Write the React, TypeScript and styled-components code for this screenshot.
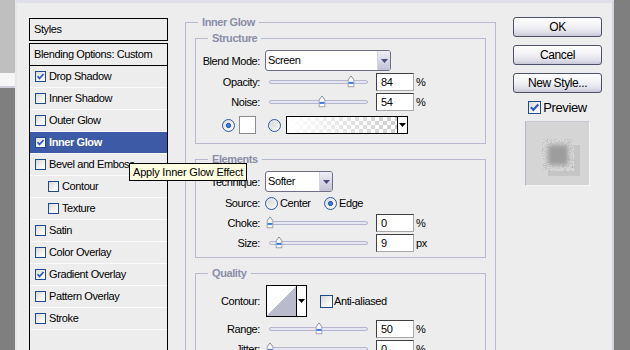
import React from 'react';
import styled, { createGlobalStyle } from 'styled-components';

const BG = '#ededed';

const GlobalStyle = createGlobalStyle`
  html, body {
    margin: 0;
    padding: 0;
    background: #808080;
  }
  body {
    font-family: "Liberation Sans", Arial, sans-serif;
    font-size: 11px;
    letter-spacing: -0.4px;
    color: #000;
  }
  * {
    box-sizing: border-box;
  }
`;

type Effect = { name: string; checked?: boolean; indent?: boolean; selected?: boolean };

const effects: Effect[] = [
  { name: 'Drop Shadow', checked: true },
  { name: 'Inner Shadow' },
  { name: 'Outer Glow' },
  { name: 'Inner Glow', checked: true, selected: true },
  { name: 'Bevel and Emboss' },
  { name: 'Contour', indent: true },
  { name: 'Texture', indent: true },
  { name: 'Satin' },
  { name: 'Color Overlay' },
  { name: 'Gradient Overlay', checked: true },
  { name: 'Pattern Overlay' },
  { name: 'Stroke' },
];

const Check: React.FC<{ checked?: boolean; size?: number }> = ({ checked, size = 13 }) => (
  <CheckBox $size={size}>
    {checked && (
      <svg width={size - 2} height={size - 2} viewBox="0 0 9 9">
        <path d="M1.6 4.2 L3.5 6.4 L7.6 2" fill="none" stroke="#2b58c8" strokeWidth="1.7" />
      </svg>
    )}
  </CheckBox>
);

const Arrow: React.FC<{ color?: string }> = ({ color = '#000' }) => (
  <svg width="7" height="4" viewBox="0 0 7 4">
    <path d="M0 0 H7 L3.5 4 Z" fill={color} />
  </svg>
);

const Slider: React.FC<{ pct: number }> = ({ pct }) => (
  <SliderBox>
    <Track>
      <Thumb style={{ left: `${pct}%` }}>
        <svg width="7" height="12" viewBox="0 0 7 12">
          <path d="M0.5 4.5 L3.5 0.5 L6.5 4.5 V11.5 H0.5 Z" fill="#fbfbfb" stroke="#8c8c9c" />
          <rect x="1" y="6.5" width="5" height="2" fill="#3a7be0" />
        </svg>
      </Thumb>
    </Track>
  </SliderBox>
);

const SliderRow: React.FC<{ label: string; pct: number; value: string; unit: string }> = ({
  label,
  pct,
  value,
  unit,
}) => (
  <Row $h={20}>
    <Label>{label}</Label>
    <Slider pct={pct} />
    <NumField>{value}</NumField>
    <Unit>{unit}</Unit>
  </Row>
);

const App: React.FC = () => {
  return (
    <Screen>
      <GlobalStyle />
      <LeftStrip>
        <StripTop />
        <StripLight />
        <StripDark />
      </LeftStrip>

      <Dialog>
        <StylesPanel>
          <StylesHeader>Styles</StylesHeader>
          <StylesList>
            <BlendRow>Blending Options: Custom</BlendRow>
            {effects.map((e) => (
              <EffectRow key={e.name} $indent={!!e.indent} $selected={!!e.selected}>
                <Check checked={e.checked} size={11} />
                <span>{e.name}</span>
              </EffectRow>
            ))}
          </StylesList>
        </StylesPanel>

        <Main>
          <Group>
            <Legend>Inner Glow</Legend>
            <Sections>
              <Group>
                <Legend>Structure</Legend>
                <Body $pt={4} $pb={8}>
                  <Row $h={23}>
                    <Label>Blend Mode:</Label>
                    <Select $w={126}>
                      <SelectText>Screen</SelectText>
                      <SelectBtn>
                        <Arrow color="#4b4b80" />
                      </SelectBtn>
                    </Select>
                  </Row>
                  <SliderRow label="Opacity:" pct={84} value="84" unit="%" />
                  <SliderRow label="Noise:" pct={54} value="54" unit="%" />
                  <ColorRow>
                    <Radio $checked />
                    <ColorSwatch />
                    <Radio />
                    <GradientSwatch>
                      <GradientFill />
                      <SwatchArrow>
                        <Arrow />
                      </SwatchArrow>
                    </GradientSwatch>
                  </ColorRow>
                </Body>
              </Group>

              <Group>
                <Legend>Elements</Legend>
                <Body $pt={4} $pb={4}>
                  <Row $h={23}>
                    <Label>Technique:</Label>
                    <Select $w={68}>
                      <SelectText>Softer</SelectText>
                      <SelectBtn>
                        <Arrow color="#4b4b80" />
                      </SelectBtn>
                    </Select>
                  </Row>
                  <Row $h={20}>
                    <Label>Source:</Label>
                    <RadioOption $w={59}>
                      <Radio />
                      <span>Center</span>
                    </RadioOption>
                    <RadioOption>
                      <Radio $checked />
                      <span>Edge</span>
                    </RadioOption>
                  </Row>
                  <SliderRow label="Choke:" pct={0} value="0" unit="%" />
                  <SliderRow label="Size:" pct={9} value="9" unit="px" />
                </Body>
              </Group>

              <Group>
                <Legend>Quality</Legend>
                <Body $pt={5} $pb={20}>
                  <Row $h={32}>
                    <Label>Contour:</Label>
                    <ContourSwatch>
                      <ContourCurve />
                      <SwatchArrow>
                        <Arrow />
                      </SwatchArrow>
                    </ContourSwatch>
                    <CheckOption>
                      <Check />
                      <span>Anti-aliased</span>
                    </CheckOption>
                  </Row>
                  <Spacer $h={2} />
                  <SliderRow label="Range:" pct={50} value="50" unit="%" />
                  <SliderRow label="Jitter:" pct={0} value="0" unit="%" />
                </Body>
              </Group>
            </Sections>
          </Group>
        </Main>

        <Side>
          <Button>OK</Button>
          <Button>Cancel</Button>
          <Button>New Style...</Button>
          <PreviewRow>
            <Check checked />
            <span>Preview</span>
          </PreviewRow>
          <PreviewBox>
            <svg width="63" height="63" viewBox="0 0 63 63">
              <defs>
                <filter id="grain" x="0" y="0" width="100%" height="100%">
                  <feTurbulence type="fractalNoise" baseFrequency="1.1" numOctaves="2" seed="7" />
                  <feColorMatrix type="saturate" values="0" />
                  <feComponentTransfer>
                    <feFuncA type="discrete" tableValues="0 0 0.5 0.9" />
                  </feComponentTransfer>
                </filter>
                <filter id="soft" x="-20%" y="-20%" width="140%" height="140%">
                  <feGaussianBlur stdDeviation="2.2" />
                </filter>
                <clipPath id="square">
                  <rect x="16" y="17" width="32" height="32" />
                </clipPath>
              </defs>
              <rect x="22" y="23" width="32" height="31" fill="#c5c5c5" />
              <g clipPath="url(#square)">
                <rect x="16" y="17" width="32" height="32" fill="#d8d8d8" />
                <rect x="16" y="17" width="32" height="32" filter="url(#grain)" />
                <rect x="22" y="23" width="20" height="20" fill="#9d9d9d" filter="url(#soft)" />
              </g>
            </svg>
          </PreviewBox>
        </Side>
      </Dialog>

      <RightStrip />

      <Tooltip>Apply Inner Glow Effect</Tooltip>
    </Screen>
  );
};

export default App;

const Screen = styled.div`
  position: relative;
  display: flex;
  width: 630px;
  height: 350px;
  overflow: hidden;
`;

const LeftStrip = styled.div`
  width: 15px;
  display: flex;
  flex-direction: column;
`;

const StripTop = styled.div`
  height: 73px;
  background: #bfbfbf;
`;

const StripLight = styled.div`
  height: 15px;
  background: #f6f6f6;
  border-bottom: 2px solid #cfcfdf;
`;

const StripDark = styled.div`
  flex: 1;
  background: #7f7f7f;
`;

const RightStrip = styled.div`
  width: 16px;
  background: #7f7f7f;
`;

const Dialog = styled.div`
  flex: 1;
  display: flex;
  align-items: flex-start;
  gap: 17px;
  background: ${BG};
  border-top: 3px solid #e0e0ea;
  border-left: 2px solid #e6e6ee;
  border-right: 2px solid #d4d4e0;
  padding: 14px 10px 0 12px;
`;

const StylesPanel = styled.div`
  width: 139px;
  margin-top: 1px;
  align-self: stretch;
  display: flex;
  flex-direction: column;
`;

const StylesHeader = styled.div`
  height: 23px;
  border: 1px solid #000;
  padding-left: 4px;
  line-height: 21px;
  margin-bottom: 2px;
`;

const StylesList = styled.div`
  flex: 1;
  border: 1px solid #000;
  border-bottom: none;
`;

const BlendRow = styled.div`
  height: 22px;
  border-bottom: 1px solid #000;
  padding-left: 4px;
  line-height: 21px;
`;

const EffectRow = styled.div<{ $indent: boolean; $selected: boolean }>`
  height: 22px;
  display: flex;
  align-items: center;
  gap: 3px;
  padding-left: ${(p) => (p.$indent ? 18 : 5)}px;
  padding-bottom: 1px;
  border-bottom: 1px solid #fbfbfb;
  background: ${(p) => (p.$selected ? '#3d5aa6' : 'transparent')};
  color: ${(p) => (p.$selected ? '#fff' : '#000')};
  font-weight: ${(p) => (p.$selected ? 'bold' : 'normal')};
`;

const CheckBox = styled.span<{ $size: number }>`
  flex-shrink: 0;
  width: ${(p) => p.$size}px;
  height: ${(p) => p.$size}px;
  border: 1px solid #1d4b8f;
  background: linear-gradient(135deg, #d8d8d4 0%, #f4f4f2 60%, #ffffff 100%);
  display: flex;
  align-items: center;
  justify-content: center;
`;

const Main = styled.div`
  width: 311px;
  margin-top: 5px;
`;

const Group = styled.div`
  border: 1px solid #b9b9cf;
`;

const Legend = styled.div`
  width: fit-content;
  height: 13px;
  line-height: 13px;
  margin: -7px 0 0 12px;
  padding: 0 4px;
  background: ${BG};
  color: #8b8ea7;
  font-weight: bold;
`;

const Sections = styled.div`
  display: flex;
  flex-direction: column;
  gap: 15px;
  padding: 9px 9px 40px;
`;

const Body = styled.div<{ $pt: number; $pb: number }>`
  display: flex;
  flex-direction: column;
  padding: ${(p) => p.$pt}px 0 ${(p) => p.$pb}px;
`;

const Row = styled.div<{ $h: number }>`
  height: ${(p) => p.$h}px;
  display: flex;
  align-items: center;
`;

const Spacer = styled.div<{ $h: number }>`
  height: ${(p) => p.$h}px;
`;

const Label = styled.span`
  width: 64px;
  margin-right: 5px;
  text-align: right;
  flex-shrink: 0;
`;

const Select = styled.div<{ $w: number }>`
  width: ${(p) => p.$w}px;
  height: 21px;
  display: flex;
  background: #fff;
  border: 1px solid #6e6e86;
  border-radius: 3px;
  overflow: hidden;
`;

const SelectText = styled.span`
  flex: 1;
  padding-left: 2px;
  line-height: 19px;
`;

const SelectBtn = styled.span`
  width: 13px;
  display: flex;
  align-items: center;
  justify-content: center;
  background: linear-gradient(#eeeef6, #c2c2d6);
  border-left: 1px solid #d4d4e2;
`;

const SliderBox = styled.div`
  width: 111px;
  padding: 0 8px 0 4px;
  display: flex;
  align-items: center;
`;

const Track = styled.div`
  position: relative;
  flex: 1;
  height: 4px;
  border: 1px solid #b6b6ce;
  border-radius: 2px;
  background: #e6e6f0;
`;

const Thumb = styled.span`
  position: absolute;
  top: 50%;
  display: flex;
  transform: translate(-50%, -55%);
`;

const NumField = styled.div`
  width: 38px;
  height: 18px;
  background: #fff;
  border: 1px solid;
  border-color: #404040 #a8a8a8 #a8a8a8 #404040;
  padding: 0 4px;
  line-height: 16px;
`;

const Unit = styled.span`
  margin-left: 2px;
`;

const ColorRow = styled.div`
  height: 20px;
  margin-top: 3px;
  display: flex;
  align-items: center;
  padding-left: 26px;
`;

const Radio = styled.span<{ $checked?: boolean }>`
  flex-shrink: 0;
  width: 13px;
  height: 13px;
  border-radius: 50%;
  border: 1px solid #2d579c;
  background: ${(p) =>
    p.$checked
      ? 'radial-gradient(circle, #4a86e8 0, #2c5cc4 2.2px, transparent 2.8px), radial-gradient(circle at 35% 35%, #dcdcd8, #ffffff)'
      : 'radial-gradient(circle at 35% 35%, #dcdcd8, #ffffff)'};
`;

const ColorSwatch = styled.span`
  width: 17px;
  height: 18px;
  margin: 0 12px 0 4px;
  background: #fff;
  border: 1px solid #8c8c8c;
`;

const GradientSwatch = styled.div`
  width: 122px;
  height: 18px;
  margin-left: 5px;
  display: flex;
  border: 1px solid #000;
  background: #fff;
`;

const GradientFill = styled.div`
  flex: 1;
  background: linear-gradient(to right, #ffffff, rgba(255, 255, 255, 0)),
    repeating-conic-gradient(#cdcdcd 0 25%, #ffffff 0 50%) 0 0 / 8px 8px;
`;

const SwatchArrow = styled.div`
  width: 10px;
  border-left: 1px solid #000;
  background: #fff;
  display: flex;
  align-items: center;
  justify-content: center;
`;

const RadioOption = styled.span<{ $w?: number }>`
  display: flex;
  align-items: center;
  gap: 2px;
  width: ${(p) => (p.$w ? `${p.$w}px` : 'auto')};
`;

const ContourSwatch = styled.div`
  width: 41px;
  height: 32px;
  margin-left: 1px;
  display: flex;
  border: 1px solid #000;
`;

const ContourCurve = styled.div`
  flex: 1;
  background: linear-gradient(to bottom right, #ffffff 50%, #b9bbca 50%);
`;

const CheckOption = styled.span`
  display: flex;
  align-items: center;
  gap: 1px;
  margin-left: 13px;
`;

const Side = styled.div`
  width: 89px;
  display: flex;
  flex-direction: column;
  align-items: center;
  gap: 8px;
`;

const Button = styled.button`
  width: 89px;
  height: 20px;
  padding: 0;
  border: 1px solid #4c5068;
  border-radius: 3px;
  background: linear-gradient(#fefefe 0%, #f3f3f6 45%, #dedee8 80%, #c8c8d6 100%);
  font-family: inherit;
  font-size: 12px;
  letter-spacing: -0.4px;
  color: #000;
`;

const PreviewRow = styled.label`
  height: 12px;
  display: flex;
  align-items: center;
  gap: 2px;
  font-size: 13px;
`;

const PreviewBox = styled.div`
  width: 65px;
  height: 65px;
  background: #d5d5d5;
  border: 1px solid;
  border-color: #c6c6d8 #f6f6fa #f6f6fa #b6b6cc;
  display: flex;
`;

const Tooltip = styled.div`
  position: absolute;
  left: 129px;
  top: 163px;
  height: 18px;
  padding: 0 3px;
  border: 1px solid #000;
  background: #ffffe1;
  line-height: 16px;
  letter-spacing: -0.2px;
  white-space: nowrap;
`;
